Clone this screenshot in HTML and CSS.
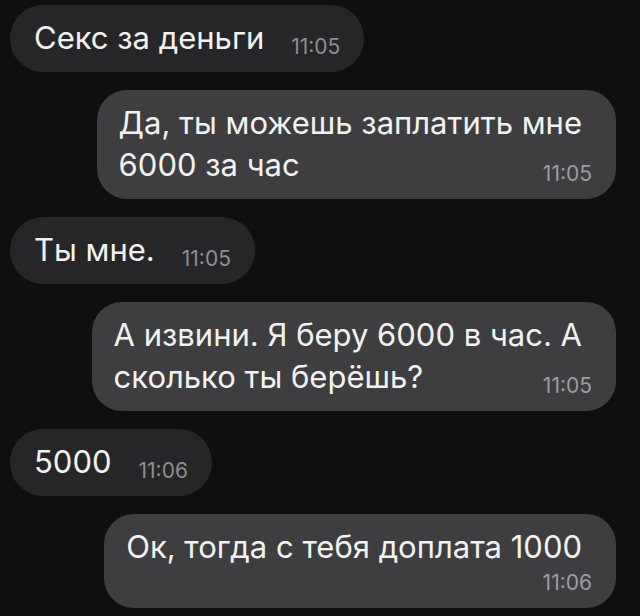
FILE: index.html
```html
<!DOCTYPE html>
<html lang="ru">
<head>
    <meta charset="UTF-8">
    <meta name="viewport" content="width=device-width, initial-scale=1.0">
    <title>Чат</title>
    <link rel="stylesheet" href="styles.css">
</head>
<body>
    <section class="chat">
        <div class="msg in">
            <div class="row">
                <span class="text">Секс за деньги</span>
                <span class="time">11:05</span>
            </div>
        </div>

        <div class="msg out">
            <div class="text">Да, ты можешь заплатить мне</div>
            <div class="row">
                <span class="text">6000 за час</span>
                <span class="time">11:05</span>
            </div>
        </div>

        <div class="msg in">
            <div class="row">
                <span class="text">Ты мне.</span>
                <span class="time">11:05</span>
            </div>
        </div>

        <div class="msg out">
            <div class="text">А извини. Я беру 6000 в час. А</div>
            <div class="row">
                <span class="text">сколько ты берёшь?</span>
                <span class="time">11:05</span>
            </div>
        </div>

        <div class="msg in">
            <div class="row">
                <span class="text">5000</span>
                <span class="time">11:06</span>
            </div>
        </div>

        <div class="msg out">
            <div class="text">Ок, тогда с тебя доплата 1000</div>
            <div class="time-line">
                <span class="time">11:06</span>
            </div>
        </div>
    </section>
</body>
</html>
```

FILE: styles.css
```css
body {
    font-family: Inter, "Noto Sans", sans-serif;
    background-color: #0f0f11;
    color: #f2f2f4;
    margin: 0;
    padding: 0;
}

.chat {
    display: flex;
    flex-direction: column;
    align-items: flex-start;
    gap: 18px;
    padding: 5px 24px 0 10px;
}

.msg {
    padding: 12px 24px 13px 24px;
    border-radius: 33px;
    background-color: #262628;
}

.msg.out {
    align-self: flex-end;
    background-color: #3e3e41;
    border-radius: 30px;
    padding-left: 22px;
}

/* перенесённая строка не доходит до края пузыря */
.msg.out > .text {
    padding-right: 10px;
}

.text {
    font-size: 31px;
    line-height: 42px;
    white-space: nowrap;
}

.row {
    display: flex;
    align-items: flex-end;
    justify-content: space-between;
    gap: 27px;
}

.time {
    font-size: 21px;
    line-height: 24px;
    color: #8e8e93;
}

.msg.out .time {
    color: #9c9ca0;
}

.time-line {
    display: flex;
    justify-content: flex-end;
    margin-top: 3px;
}
```
